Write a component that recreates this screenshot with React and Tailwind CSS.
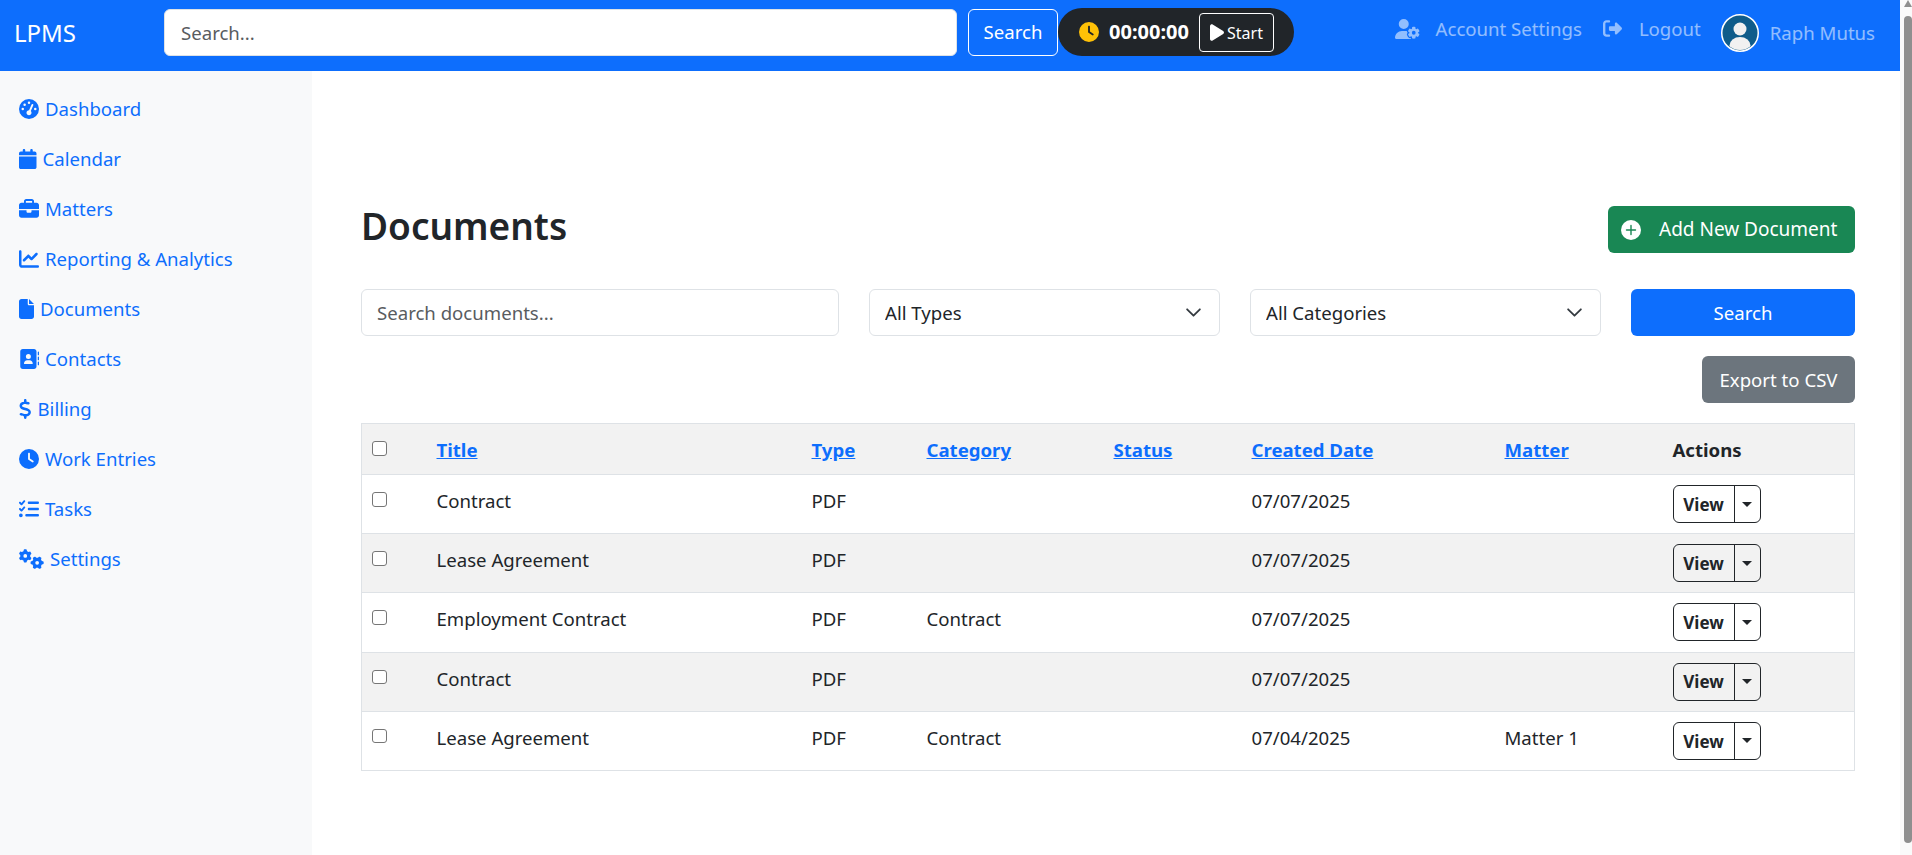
import {
  FaGaugeHigh, FaCalendar, FaBriefcase, FaChartLine, FaFile, FaAddressBook, FaDollarSign,
  FaClock, FaListCheck, FaGears, FaUserGear, FaRightFromBracket, FaPlay,
} from "react-icons/fa6"

// icon width is set per item since react-icons puts a 1em square on the svg
const navItems = [
  { label: "Dashboard", icon: FaGaugeHigh, size: "w-[20px]" },
  { label: "Calendar", icon: FaCalendar, size: "w-[17.5px]" },
  { label: "Matters", icon: FaBriefcase, size: "w-[20px]" },
  { label: "Reporting & Analytics", icon: FaChartLine, size: "w-[20px]" },
  { label: "Documents", icon: FaFile, size: "w-[15px]" },
  { label: "Contacts", icon: FaAddressBook, size: "w-[20px]" },
  { label: "Billing", icon: FaDollarSign, size: "w-[12.5px]" },
  { label: "Work Entries", icon: FaClock, size: "w-[20px]" },
  { label: "Tasks", icon: FaListCheck, size: "w-[20px]" },
  { label: "Settings", icon: FaGears, size: "w-[25px]" },
]

const rows = [
  { title: "Contract", type: "PDF", category: "", date: "07/07/2025", matter: "" },
  { title: "Lease Agreement", type: "PDF", category: "", date: "07/07/2025", matter: "" },
  { title: "Employment Contract", type: "PDF", category: "Contract", date: "07/07/2025", matter: "" },
  { title: "Contract", type: "PDF", category: "", date: "07/07/2025", matter: "" },
  { title: "Lease Agreement", type: "PDF", category: "Contract", date: "07/04/2025", matter: "Matter 1" },
]

function Avatar() {
  return (
    <svg viewBox="0 0 38 38" className="w-[38px] h-[38px] shrink-0">
      <defs>
        <clipPath id="avatarClip"><circle cx="19" cy="19" r="17" /></clipPath>
      </defs>
      <circle cx="19" cy="19" r="18.25" fill="#0f5c8a" stroke="#fff" strokeWidth="1.5" />
      <g clipPath="url(#avatarClip)" fill="#f1f1f1">
        <circle cx="19" cy="15" r="6.5" />
        <ellipse cx="19" cy="31.5" rx="10.5" ry="8.5" />
      </g>
    </svg>
  )
}

function PlusIcon() {
  return (
    <svg viewBox="0 0 20 20" className="w-5 h-5 shrink-0">
      <circle cx="10" cy="10" r="10" fill="#fff" />
      <path d="M10 5.5v9M5.5 10h9" stroke="#198754" strokeWidth="1.4" strokeLinecap="round" />
    </svg>
  )
}

function Checkbox() {
  return <input type="checkbox" className="appearance-none block w-[14.5px] h-[14.5px] bg-white border border-[#767676] rounded-[3px]" />
}

function Select({ label, className }) {
  return (
    <div className={"relative " + className}>
      <select className="appearance-none w-full h-[47px] bg-white border border-[#dee2e6] rounded-[6px] pl-[15px] pr-9 text-[#212529]">
        <option>{label}</option>
      </select>
      <svg viewBox="0 0 16 16" className="absolute right-[18px] top-[15px] w-[17px] h-[17px] pointer-events-none" fill="none" stroke="#343a40" strokeWidth="1.7" strokeLinecap="round" strokeLinejoin="round">
        <path d="m2 5 6 6 6-6" />
      </svg>
    </div>
  )
}

function HeadLink({ children }) {
  return <a href="#" className="text-[#0d6efd] underline font-bold">{children}</a>
}

function ViewButton() {
  return (
    <div className="inline-flex h-[38px] border border-[#212529] rounded-[6px] text-[#212529] align-top">
      <button className="w-[61px] pt-[1px] font-bold text-[17px] border-r border-[#212529]">View</button>
      <button className="w-[25px] flex items-center justify-center">
        <span className="w-0 h-0 border-x-[5px] border-x-transparent border-t-[5px] border-t-[#212529]" />
      </button>
    </div>
  )
}

export default function App() {
  return (
    <div className="flex h-screen overflow-hidden bg-white text-[18.6px] text-[#212529] font-['Noto_Sans','Open_Sans',sans-serif]">
      <div className="flex-1 flex flex-col min-w-0">
        <nav className="h-[71px] shrink-0 bg-[#0d6efd] flex items-center pb-[7px]">
          <a href="#" className="w-[164px] shrink-0 pl-[14px] text-white text-[24px] mt-[2px]">LPMS</a>
          <input placeholder="Search..." className="w-[793px] h-[47px] bg-white rounded-[6px] border border-[#dee2e6] px-[16px] placeholder:text-[#595c5f]" />
          <button className="ml-[11px] w-[90px] h-[47px] text-white border border-white rounded-[6px]">Search</button>
          <div className="w-[236px] h-[48px] bg-[#212529] rounded-full flex items-center pl-[21px]">
            <FaClock className="text-[#ffc107] w-5 h-5 shrink-0" />
            <span className="ml-[10px] w-[80px] text-white font-bold text-[20px]">00:00:00</span>
            <button className="ml-[10px] w-[75px] h-[39px] border border-white rounded-[4px] text-white text-[16px] flex items-center justify-center gap-[3px]">
              <FaPlay className="w-[14px] h-[19px]" />
              <span className="mt-[2px]">Start</span>
            </button>
          </div>
          <div className="ml-auto flex items-center text-white/55 pr-[25px]">
            <a href="#" className="flex items-center gap-[16px] -mt-[6px]">
              <FaUserGear className="w-[25px] h-[20px]" />
              Account Settings
            </a>
            <a href="#" className="ml-[21px] flex items-center gap-[17px] -mt-[6px]">
              <FaRightFromBracket className="w-[19px] h-[19px]" />
              Logout
            </a>
            <a href="#" className="ml-[20px] flex items-center gap-[11px] mt-[1px]">
              <Avatar />
              Raph Mutus
            </a>
          </div>
        </nav>

        <div className="flex-1 flex min-h-0">
          <aside className="w-[312px] shrink-0 bg-[#f8f9fa] pt-[13px] pl-[19px]">
            {navItems.map((item) => (
              <a key={item.label} href="#" className="h-[50px] flex items-center gap-[6px] text-[#0d6efd]">
                <item.icon className={"h-[20px] shrink-0 " + item.size} />
                {item.label}
              </a>
            ))}
          </aside>

          <main className="flex-1 min-w-0 pl-[49px] pr-[45px] pt-[135px]">
            <div className="flex items-center justify-between">
              <h1 className="text-[37px] leading-[48px] font-semibold -mt-[7px]">Documents</h1>
              <button className="w-[247px] h-[47px] bg-[#198754] text-white text-[19px] rounded-[6px] flex items-center pl-[13px] gap-[18px]">
                <PlusIcon />
                Add New Document
              </button>
            </div>

            <div className="mt-[36px] flex gap-[30px]">
              <input placeholder="Search documents..." className="w-[478px] h-[47px] border border-[#dee2e6] rounded-[6px] px-[15px] placeholder:text-[#595c5f]" />
              <Select label="All Types" className="w-[351px]" />
              <Select label="All Categories" className="w-[351px]" />
              <button className="w-[224px] h-[47px] bg-[#0d6efd] text-white rounded-[6px]">Search</button>
            </div>

            <div className="mt-[20px] flex justify-end">
              <button className="w-[153px] h-[47px] bg-[#6c757d] text-white rounded-[6px]">Export to CSV</button>
            </div>

            <table className="mt-[20px] w-full table-fixed border-collapse border border-[#dee2e6]">
              <thead>
                <tr className="h-[51px] bg-[#f2f2f2] border-b border-[#dee2e6] text-left">
                  <th className="w-[67px] pl-[10px] pt-[17px] align-top"><Checkbox /></th>
                  <th className="w-[375px] px-[8px] pt-[2px]"><HeadLink>Title</HeadLink></th>
                  <th className="w-[115px] px-[8px] pt-[2px]"><HeadLink>Type</HeadLink></th>
                  <th className="w-[187px] px-[8px] pt-[2px]"><HeadLink>Category</HeadLink></th>
                  <th className="w-[138px] px-[8px] pt-[2px]"><HeadLink>Status</HeadLink></th>
                  <th className="w-[253px] px-[8px] pt-[2px]"><HeadLink>Created Date</HeadLink></th>
                  <th className="w-[168px] px-[8px] pt-[2px]"><HeadLink>Matter</HeadLink></th>
                  <th className="px-[8px] pt-[2px] font-bold">Actions</th>
                </tr>
              </thead>
              <tbody>
                {rows.map((row, i) => (
                  <tr key={i} className={"h-[59.2px] border-b border-[#dee2e6] " + (i % 2 === 1 ? "bg-[#f2f2f2]" : "")}>
                    <td className="pl-[10px] pt-[17px] align-top"><Checkbox /></td>
                    <td className="px-[8px] pt-[12px] align-top">{row.title}</td>
                    <td className="px-[8px] pt-[12px] align-top">{row.type}</td>
                    <td className="px-[8px] pt-[12px] align-top">{row.category}</td>
                    <td className="px-[8px] pt-[12px] align-top"></td>
                    <td className="px-[8px] pt-[12px] align-top">{row.date}</td>
                    <td className="px-[8px] pt-[12px] align-top">{row.matter}</td>
                    <td className="px-[8px] pt-[10px] align-top"><ViewButton /></td>
                  </tr>
                ))}
              </tbody>
            </table>
          </main>
        </div>
      </div>

      {/* page scrollbar */}
      <div className="w-[12px] shrink-0 bg-[#fafafa] pl-[4px] pb-[12px] flex flex-col">
        <svg viewBox="0 0 8 7" className="w-[8px] h-[7px] shrink-0" fill="#8f8f8f"><path d="M4 0 8 7H0z" /></svg>
        <div className="flex-1 mt-[9px] bg-[#8f8f8f] rounded-[4px]" />
      </div>
    </div>
  )
}
